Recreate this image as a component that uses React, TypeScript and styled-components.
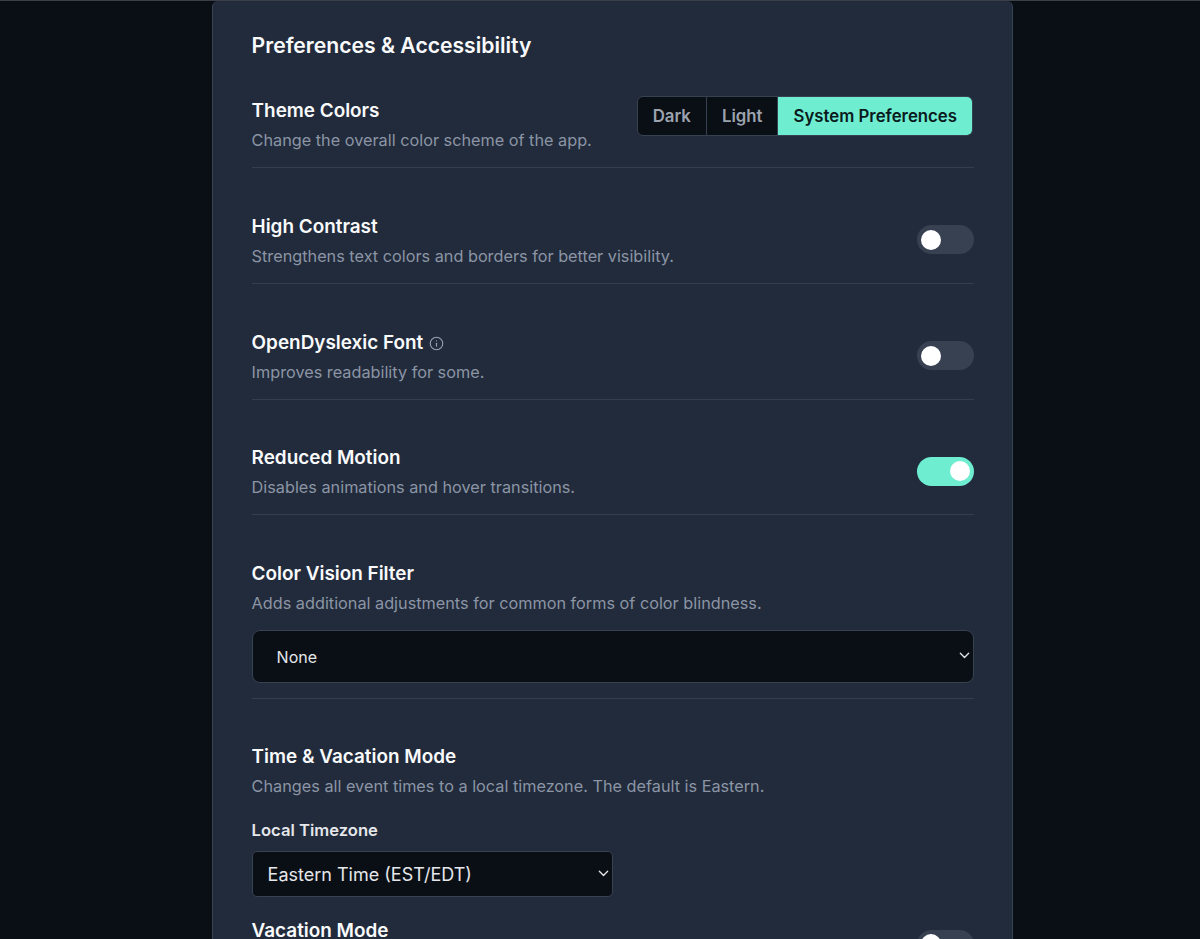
import React from 'react';
import styled, { createGlobalStyle } from 'styled-components';

const GlobalStyle = createGlobalStyle`
  html, body {
    margin: 0;
    height: 939px;
    overflow: hidden;
    background: #0a0f15;
  }
  * {
    box-sizing: border-box;
  }
`;

const Chevron: React.FC = () => (
  <ChevronIcon viewBox="0 0 12 8" fill="none" stroke="currentColor" strokeWidth="1.5" strokeLinecap="round" strokeLinejoin="round">
    <path d="M1.25 1.5 6 6.25l4.75-4.75" />
  </ChevronIcon>
);

const Toggle: React.FC<{ on?: boolean }> = ({ on }) => (
  <ToggleTrack $on={on}>
    <ToggleKnob />
  </ToggleTrack>
);

const App: React.FC = () => {
  return (
    <Page>
      <GlobalStyle />
      <Card>
        <CardTitle>Preferences &amp; Accessibility</CardTitle>

        <Row>
          <RowText>
            <RowTitle>Theme Colors</RowTitle>
            <RowDesc>Change the overall color scheme of the app.</RowDesc>
          </RowText>
          <Segments>
            <Segment>Dark</Segment>
            <Segment>Light</Segment>
            <Segment $active>System Preferences</Segment>
          </Segments>
        </Row>

        <Row>
          <RowText>
            <RowTitle>High Contrast</RowTitle>
            <RowDesc>Strengthens text colors and borders for better visibility.</RowDesc>
          </RowText>
          <Toggle />
        </Row>

        <Row>
          <RowText>
            <RowTitle>
              OpenDyslexic Font
              <InfoIcon viewBox="0 0 24 24" fill="none" stroke="currentColor" strokeWidth="1.75" strokeLinecap="round">
                <circle cx="12" cy="12" r="10" />
                <path d="M12 16.5v-5" />
                <path d="M12 7.75h.01" />
              </InfoIcon>
            </RowTitle>
            <RowDesc>Improves readability for some.</RowDesc>
          </RowText>
          <Toggle />
        </Row>

        <Row>
          <RowText>
            <RowTitle>Reduced Motion</RowTitle>
            <RowDesc>Disables animations and hover transitions.</RowDesc>
          </RowText>
          <Toggle on />
        </Row>

        <StackedRow>
          <RowTitle>Color Vision Filter</RowTitle>
          <RowDesc>Adds additional adjustments for common forms of color blindness.</RowDesc>
          <SelectWrap>
            <FilterSelect defaultValue="none">
              <option value="none">None</option>
            </FilterSelect>
            <Chevron />
          </SelectWrap>
        </StackedRow>

        <Section>
          <RowTitle>Time &amp; Vacation Mode</RowTitle>
          <RowDesc>Changes all event times to a local timezone. The default is Eastern.</RowDesc>
          <FieldLabel>Local Timezone</FieldLabel>
          <SelectWrap $narrow>
            <TimezoneSelect defaultValue="eastern">
              <option value="eastern">Eastern Time (EST/EDT)</option>
            </TimezoneSelect>
            <Chevron />
          </SelectWrap>
          <VacationRow>
            <RowTitle>Vacation Mode</RowTitle>
            <Toggle />
          </VacationRow>
        </Section>
      </Card>
    </Page>
  );
};

export default App;

const Page = styled.div`
  height: 939px;
  overflow: hidden;
  border-top: 1px solid #3a4046;
  font-family: Inter, 'Liberation Sans', sans-serif;
`;

const Card = styled.main`
  width: 801px;
  min-height: 1200px;
  margin: 0 0 0 212px;
  padding: 30px 38px 0 38.6px;
  background: #222b3b;
  border: 1px solid #374151;
  border-top: 0;
  border-radius: 6px 6px 0 0;
`;

const CardTitle = styled.h2`
  margin: 0 0 36px;
  font-size: 21.15px;
  line-height: 30px;
  font-weight: 600;
  color: #f9fafb;
`;

const Row = styled.section`
  display: flex;
  justify-content: space-between;
  align-items: center;
  margin-bottom: 44.8px;
  padding-bottom: 15px;
  border-bottom: 1px solid #343e4e;
`;

const RowText = styled.div`
  display: flex;
  flex-direction: column;
`;

const RowTitle = styled.h3`
  display: flex;
  align-items: center;
  margin: 0;
  font-size: 18.9px;
  line-height: 28px;
  font-weight: 600;
  color: #f9fafb;
`;

const RowDesc = styled.p`
  margin: 3px 0 0;
  font-size: 16.25px;
  line-height: 24px;
  color: #8b95a5;
`;

const InfoIcon = styled.svg`
  width: 15px;
  height: 15px;
  margin: 2px 0 0 6px;
  color: #9ca3af;
`;

const Segments = styled.div`
  display: flex;
  align-self: flex-start;
  margin: -1px 1px 0 0;
  overflow: hidden;
  border: 1px solid #374151;
  border-radius: 6px;
  background: #0a0f15;
`;

const Segment = styled.button<{ $active?: boolean }>`
  height: 38px;
  padding: 0 15px;
  border: 0;
  border-right: 1px solid #374151;
  font-family: inherit;
  font-size: 16.8px;
  font-weight: 600;
  background: ${({ $active }) => ($active ? '#6eedd0' : 'transparent')};
  color: ${({ $active }) => ($active ? '#0a1a1c' : '#9ca3af')};

  &:last-child {
    border-right: 0;
  }
`;

const ToggleTrack = styled.div<{ $on?: boolean }>`
  display: flex;
  align-items: center;
  justify-content: ${({ $on }) => ($on ? 'flex-end' : 'flex-start')};
  width: 57px;
  height: 29px;
  margin-top: -1px;
  padding: 0 4px;
  border-radius: 15px;
  background: ${({ $on }) => ($on ? '#6eedd0' : '#374151')};
`;

const ToggleKnob = styled.span`
  width: 20px;
  height: 20px;
  border-radius: 50%;
  background: #ffffff;
`;

const StackedRow = styled.section`
  margin-bottom: 44px;
  padding-bottom: 15px;
  border-bottom: 1px solid #343e4e;
`;

const Section = styled.section`
  display: flex;
  flex-direction: column;
`;

const SelectWrap = styled.div<{ $narrow?: boolean }>`
  position: relative;
  width: ${({ $narrow }) => ($narrow ? '361px' : '100%')};
  color: #e5e7eb;
`;

const ChevronIcon = styled.svg`
  position: absolute;
  bottom: 50%;
  right: 4px;
  width: 11px;
  height: 7px;
  margin-bottom: -3px;
  pointer-events: none;
`;

const FilterSelect = styled.select`
  display: block;
  width: 100%;
  height: 52.5px;
  margin-top: 15px;
  padding: 1px 24px 0;
  appearance: none;
  border: 1px solid #374151;
  border-radius: 8px;
  background: #0a0f15;
  color: #e5e7eb;
  font-family: inherit;
  font-size: 16px;
`;

const TimezoneSelect = styled.select`
  display: block;
  width: 100%;
  height: 46px;
  padding: 2px 15px 0;
  appearance: none;
  border: 1px solid #374151;
  border-radius: 5px;
  background: #0a0f15;
  color: #e5e7eb;
  font-family: inherit;
  font-size: 18px;
`;

const FieldLabel = styled.label`
  margin: 20px 0 9px;
  font-size: 16.6px;
  line-height: 24px;
  font-weight: 600;
  color: #e5e7eb;
`;

const VacationRow = styled.div`
  display: flex;
  justify-content: space-between;
  align-items: center;
  min-height: 55px;
  margin-top: 20.5px;

  h3 {
    align-self: flex-start;
  }
`;
